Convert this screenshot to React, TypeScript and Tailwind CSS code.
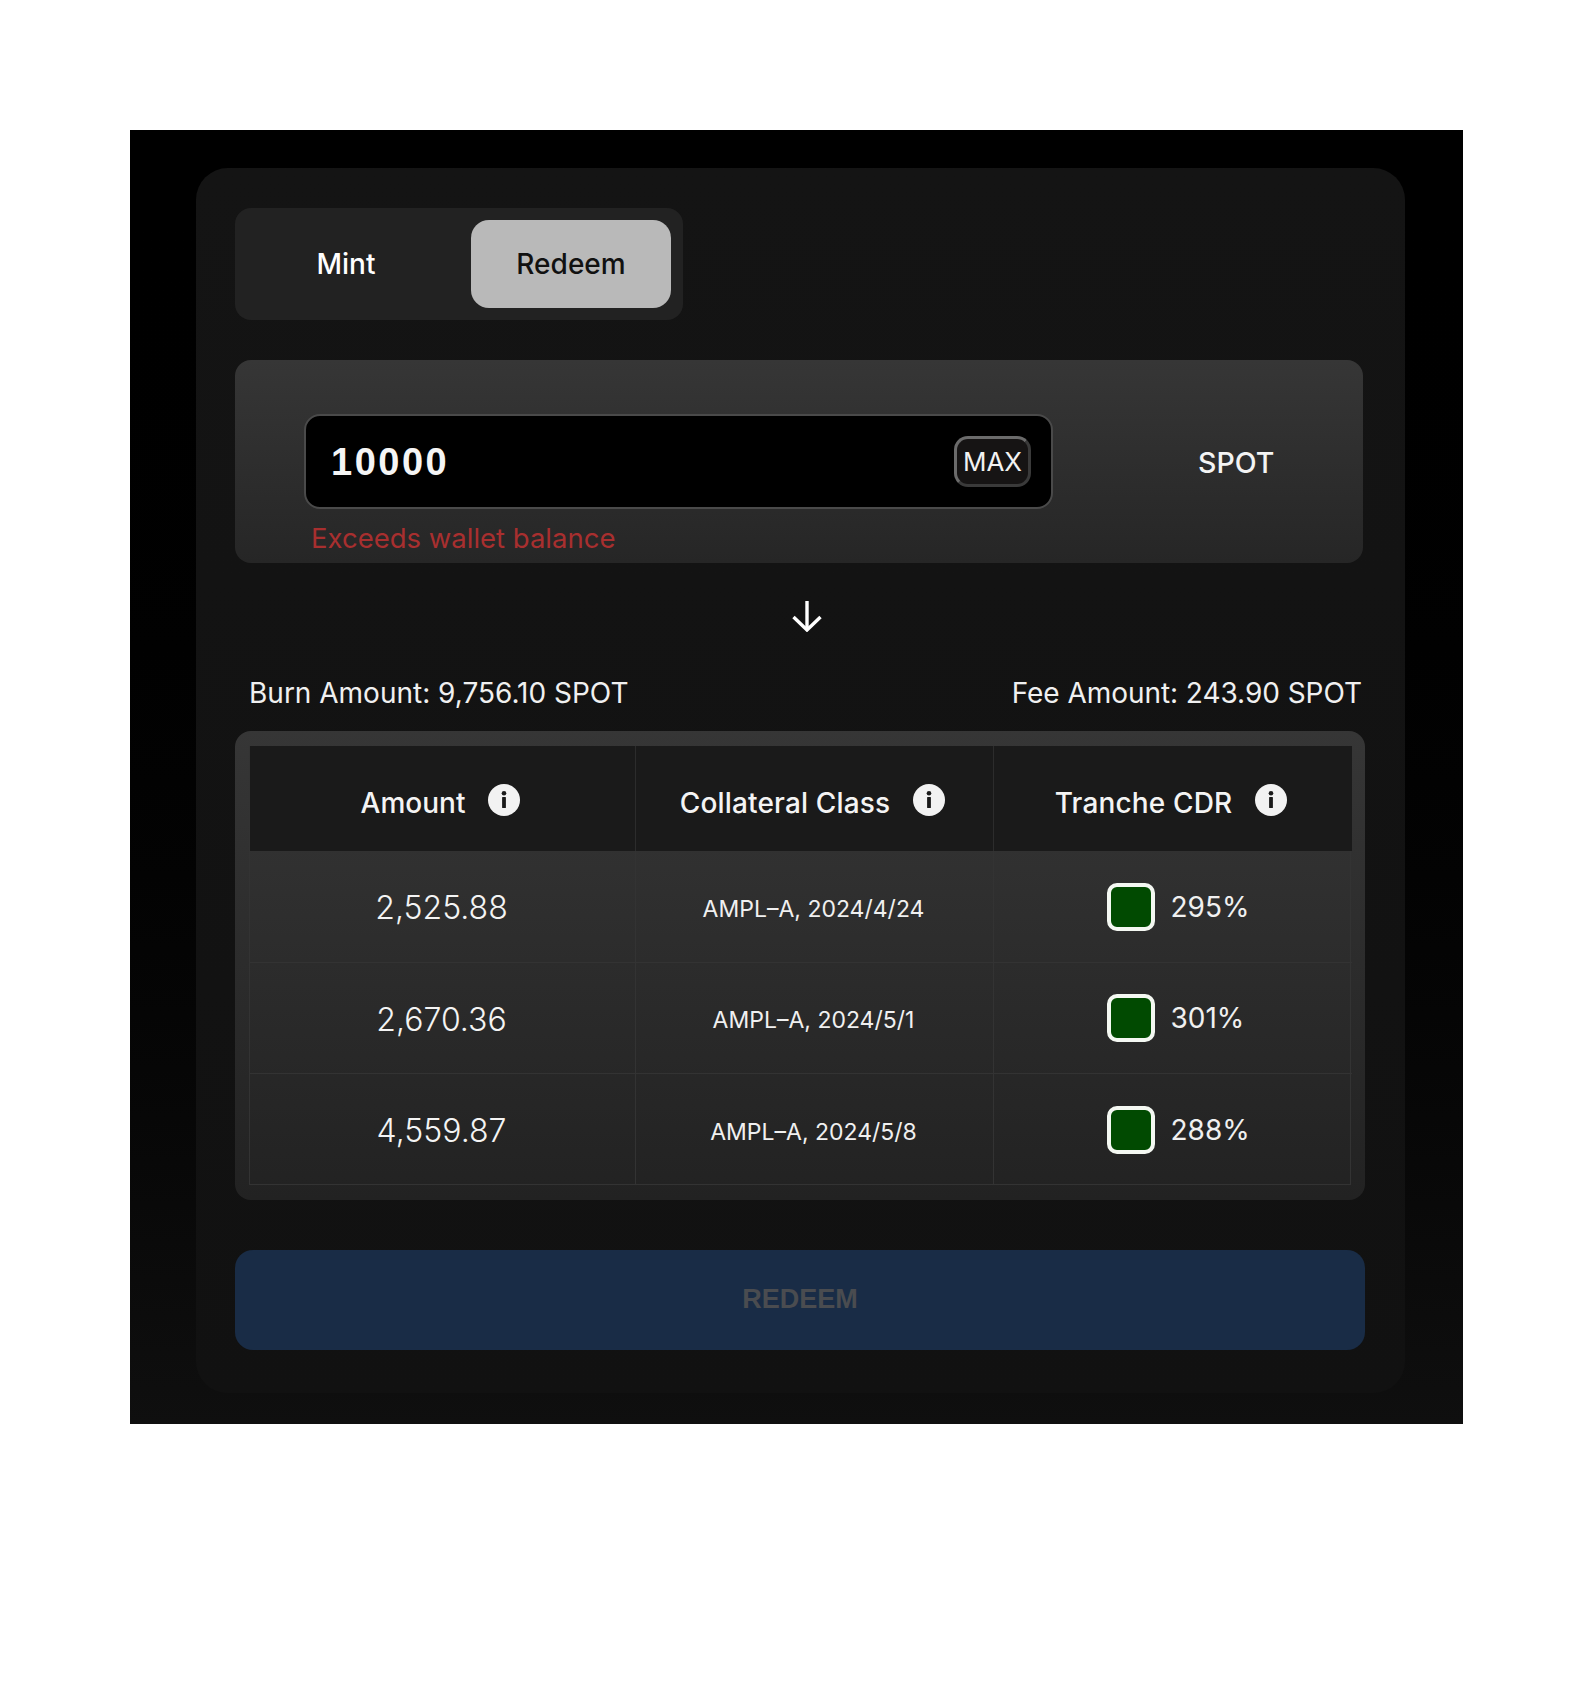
const inter = { fontFamily: 'Inter, "Liberation Sans", sans-serif' }

const rows = [
  { amount: '2,525.88', tranche: 'AMPL–A, 2024/4/24', cdr: '295%' },
  { amount: '2,670.36', tranche: 'AMPL–A, 2024/5/1', cdr: '301%' },
  { amount: '4,559.87', tranche: 'AMPL–A, 2024/5/8', cdr: '288%' },
]

const InfoIcon = () => (
  <svg viewBox="0 0 32 32" className="h-8 w-8 flex-none">
    <circle cx="16" cy="16" r="16" fill="#f2f2f2" />
    <circle cx="16" cy="9.2" r="2.3" fill="#1a1a1a" />
    <rect x="14.1" y="13" width="3.8" height="11" rx="0.6" fill="#1a1a1a" />
  </svg>
)

const HeaderCell = ({ label, border, tracking }: { label: string; border?: boolean; tracking?: string }) => (
  <div className={`flex items-center justify-center gap-[23px] bg-[#1a1a1a] pt-[2px] pr-[4px] ${border ? 'border-l border-[#2c2c2c]' : ''}`}>
    <span className={`mt-[6px] text-[28px] leading-none font-medium text-[#f4f4f4] ${tracking ?? ''}`}>{label}</span>
    <InfoIcon />
  </div>
)

export default function App() {
  return (
    <div className="min-h-[1685px] bg-white pt-[130px] pl-[130px]" style={inter}>
      <div className="h-[1294px] w-[1333px] bg-gradient-to-b from-[#000000] to-[#0f0f0f] pt-[38px] pl-[66px]">
        <div className="h-[1225px] w-[1209px] rounded-[32px] bg-gradient-to-b from-[#141414] to-[#111111] pt-[40px] pl-[39px]">
          {/* tabs */}
          <div className="flex h-[112px] w-[448px] items-center rounded-[16px] bg-[#222222] pr-[12px] pl-[12px]">
            <button className="flex h-[88px] w-[224px] items-center justify-center pr-[26px] text-[28px] font-medium text-white">
              Mint
            </button>
            <button className="flex h-[88px] w-[200px] items-center justify-center rounded-[18px] bg-[#b9b9b9] text-[28px] font-medium text-[#111111]">
              Redeem
            </button>
          </div>

          {/* input panel */}
          <div className="mt-[40px] h-[203px] w-[1128px] rounded-[16px] bg-gradient-to-b from-[#363636] to-[#262626] pt-[54px] pl-[69px]">
            <div className="flex items-center">
              <div className="flex h-[95px] w-[749px] items-center justify-between rounded-[16px] border-2 border-[#4a4a4a] bg-black pr-[20px] pl-[25px]">
                <span className="text-[38px] leading-none font-bold tracking-[2.5px] text-[#f5f5f5]" style={{ fontFamily: '"Liberation Sans", sans-serif' }}>
                  10000
                </span>
                <span className="flex h-[51px] w-[77px] items-center justify-center rounded-[14px] border-[3px] border-t-[#6b6b6b] border-r-[#3a3a3a] border-b-[#3a3a3a] border-l-[#6b6b6b] bg-[#161414] text-[26px] leading-none text-[#f2f2f2]">
                  MAX
                </span>
              </div>
              <span className="mt-[3px] ml-[145px] text-[28.5px] leading-none font-medium text-[#f4f4f4]">SPOT</span>
            </div>
            <p className="mt-[16px] ml-[7px] text-[27.5px] leading-none text-[#a82f2f]">Exceeds wallet balance</p>
          </div>

          {/* arrow */}
          <div className="mt-[38px] flex w-[1128px] justify-center pl-[16px]">
            <svg viewBox="0 0 30 31" className="h-[31px] w-[30px]" fill="none" stroke="#ffffff" strokeWidth="3.4">
              <path d="M15 0v29" />
              <path d="M1.5 16L15 29 28.5 16" />
            </svg>
          </div>

          {/* amounts */}
          <div className="mt-[47px] flex w-[1128px] justify-between pr-[1px] pl-[14px] text-[28px] leading-none text-[#f0f0f0]">
            <span>Burn Amount: 9,756.10 SPOT</span>
            <span className="tracking-[-0.05px]">Fee Amount: 243.90 SPOT</span>
          </div>

          {/* table */}
          <div className="mt-[24px] h-[469px] w-[1130px] rounded-[16px] bg-gradient-to-b from-[#363636] to-[#222222] pt-[15px] pl-[14px]">
            <div className="grid h-[439px] w-[1102px] grid-cols-[385px_358px_359px] grid-rows-[105px_111px_111px_112px] border-x border-b border-[#333333]">
              <HeaderCell label="Amount" />
              <HeaderCell label="Collateral Class" border tracking="tracking-[0.15px]" />
              <HeaderCell label="Tranche CDR" border tracking="tracking-[0.15px]" />
              {rows.map((r, i) => (
                <div key={r.amount} className="contents">
                  <div className={`flex items-center justify-center pt-[3px] pr-[2px] text-[32px] font-[350] text-[#f4f4f4] ${i > 0 ? 'border-t border-[#333333]' : ''}`}>
                    {r.amount}
                  </div>
                  <div className={`flex items-center justify-center border-l border-[#333333] pt-[5px] pr-[2px] text-[23px] text-[#f0f0f0] ${i > 0 ? 'border-t' : ''}`}>
                    {r.tranche}
                  </div>
                  <div className={`flex items-center justify-center gap-[16px] border-l border-[#333333] pl-[11px] text-[28px] text-[#f0f0f0] ${i > 0 ? 'border-t' : ''}`}>
                    <span className="h-[48px] w-[48px] rounded-[10px] border-[4px] border-[#f4f8f2] bg-[#014a01]" />
                    <span className="w-[80px]">{r.cdr}</span>
                  </div>
                </div>
              ))}
            </div>
          </div>

          {/* action */}
          <button
            className="mt-[50px] flex h-[100px] w-[1130px] items-center justify-center rounded-[18px] bg-[#192c46] pb-[2px] text-[27px] font-bold text-[#4a4c50]"
            style={{ fontFamily: '"Liberation Sans", sans-serif' }}
          >
            REDEEM
          </button>
        </div>
      </div>
    </div>
  )
}
